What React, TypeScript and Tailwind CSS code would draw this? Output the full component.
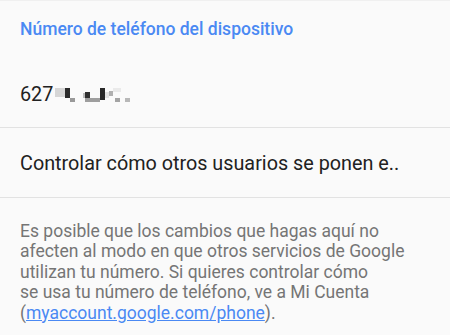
import React from 'react';

// pixelated blocks that hide the rest of the phone number
const blocks: [number, number, number, number, string][] = [
  [2, 2, 10, 9, '#d6d6d6'],
  [12, 2, 5, 10, '#2a2a2a'],
  [17, 12, 5, 4, '#999999'],
  [30, 7, 2, 5, '#bdbdbd'],
  [32, 6, 5, 6, '#303030'],
  [32, 12, 15, 4, '#9e9e9e'],
  [47, 2, 5, 12, '#282828'],
  [52, 6, 4, 6, '#e2e2e2'],
  [56, 5, 4, 5, '#b0b0b0'],
  [60, 2, 8, 4, '#eaeaea'],
  [62, 12, 5, 4, '#a4a4a4'],
  [72, 12, 5, 4, '#b8b8b8'],
];

const Pixelated: React.FC = () => (
  <svg width="80" height="16" viewBox="0 0 80 16" className="mt-[3px]">
    {blocks.map(([x, y, w, h, c], i) => (
      <rect key={i} x={x} y={y} width={w} height={h} fill={c} />
    ))}
  </svg>
);

const App: React.FC = () => {
  return (
    <div
      className="w-[450px] h-[335px] overflow-hidden bg-[#fafafa] border-t border-[#f0f0f0]"
      style={{ fontFamily: 'Roboto, "Noto Sans", sans-serif' }}
    >
      <div className="px-5 pt-[17px] pb-[20px] border-b border-[#e2e2e2]">
        <h2 className="text-[17.5px] leading-[22px] font-medium text-[#4a89f3]">
          Número de teléfono del dispositivo
        </h2>
        <div className="mt-[43px] flex items-start text-[19.8px] leading-[24px] text-[#212121]">
          <span>627</span>
          <Pixelated />
        </div>
      </div>

      <div className="px-5 pt-[23px] pb-[20px] border-b border-[#e2e2e2]">
        <p className="text-[19.8px] leading-[26px] text-[#212121] whitespace-nowrap">
          Controlar cómo otros usuarios se ponen e..
        </p>
      </div>

      <div className="px-5 pt-[23px]">
        <p className="text-[17.5px] leading-[20.4px] text-[#757575] whitespace-nowrap">
          Es posible que los cambios que hagas aquí no
          <br />
          afecten al modo en que otros servicios de Google
          <br />
          utilizan tu número. Si quieres controlar cómo
          <br />
          se usa tu número de teléfono, ve a Mi Cuenta
          <br />
          (<a className="text-[#4a89f3] underline">myaccount.google.com/phone</a>).
        </p>
      </div>
    </div>
  );
};

export default App;
